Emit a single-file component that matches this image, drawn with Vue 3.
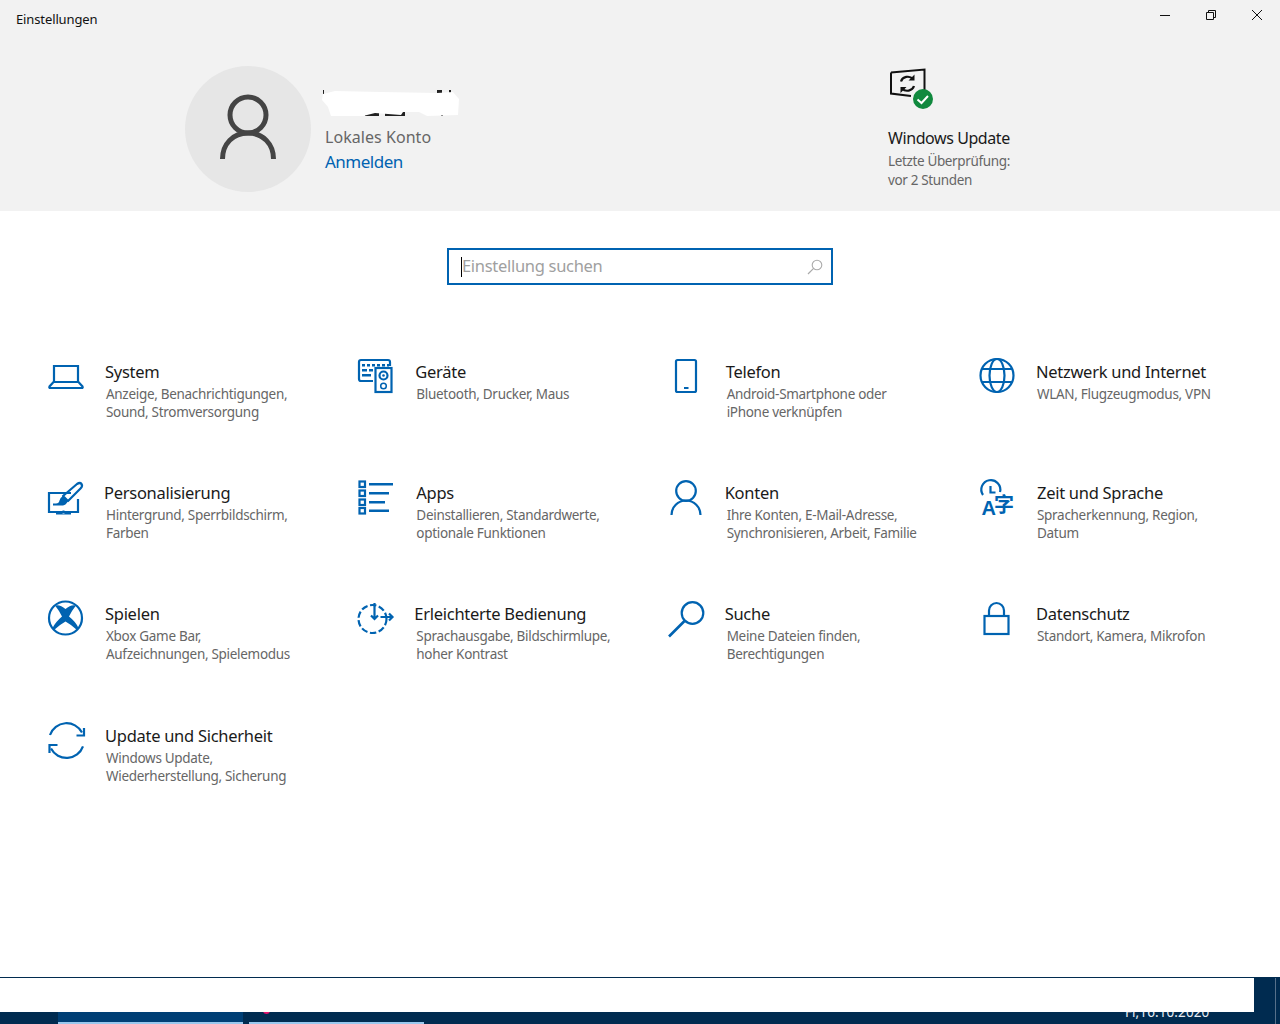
<script setup>
const items = [
  { icon: 'laptop', title: 'System', l1: 'Anzeige, Benachrichtigungen,', l2: 'Sound, Stromversorgung', dx: 0 },
  { icon: 'devices', title: 'Geräte', l1: 'Bluetooth, Drucker, Maus', l2: '', dx: 0 },
  { icon: 'phone', title: 'Telefon', l1: 'Android-Smartphone oder', l2: 'iPhone verknüpfen', dx: 0 },
  { icon: 'globe', title: 'Netzwerk und Internet', l1: 'WLAN, Flugzeugmodus, VPN', l2: '', dx: 0 },
  { icon: 'brush', title: 'Personalisierung', l1: 'Hintergrund, Sperrbildschirm,', l2: 'Farben', dx: -1 },
  { icon: 'apps', title: 'Apps', l1: 'Deinstallieren, Standardwerte,', l2: 'optionale Funktionen', dx: 1 },
  { icon: 'user', title: 'Konten', l1: 'Ihre Konten, E-Mail-Adresse,', l2: 'Synchronisieren, Arbeit, Familie', dx: -1 },
  { icon: 'time', title: 'Zeit und Sprache', l1: 'Spracherkennung, Region,', l2: 'Datum', dx: 1 },
  { icon: 'xbox', title: 'Spielen', l1: 'Xbox Game Bar,', l2: 'Aufzeichnungen, Spielemodus', dx: 0 },
  { icon: 'ease', title: 'Erleichterte Bedienung', l1: 'Sprachausgabe, Bildschirmlupe,', l2: 'hoher Kontrast', dx: -1 },
  { icon: 'search', title: 'Suche', l1: 'Meine Dateien finden,', l2: 'Berechtigungen', dx: -1 },
  { icon: 'lock', title: 'Datenschutz', l1: 'Standort, Kamera, Mikrofon', l2: '', dx: 0 },
  { icon: 'sync', title: 'Update und Sicherheit', l1: 'Windows Update,', l2: 'Wiederherstellung, Sicherung', dx: 0 }
]
</script>

<template>
  <div class="window">
    <header class="head">
      <div class="titlebar">
        <span class="apptitle">Einstellungen</span>
        <div class="controls">
          <span class="ctl"><svg width="12" height="12" viewBox="0 0 12 12"><path d="M1 6.5h10" stroke="#111" fill="none"/></svg></span>
          <span class="ctl"><svg width="12" height="12" viewBox="0 0 12 12"><path d="M1.5 3.5h7v7h-7zM3.5 3.500v-2h7v7h-2" stroke="#111" fill="none"/></svg></span>
          <span class="ctl"><svg width="12" height="12" viewBox="0 0 12 12"><path d="M1 1l10 10M11 1L1 11" stroke="#111" fill="none"/></svg></span>
        </div>
      </div>
      <div class="summary">
        <div class="profile">
          <div class="avatar">
            <svg width="60" height="70" viewBox="0 0 60 70">
              <circle cx="30" cy="21" r="18" fill="none" stroke="#444" stroke-width="5"/>
              <path d="M4.500 65C4.500 50 15 39 30 39S55.500 50 55.500 65" fill="none" stroke="#444" stroke-width="5"/>
            </svg>
          </div>
          <div class="who">
            <svg class="blot" width="142" height="30" viewBox="0 0 142 30">
              <path d="M4 2h1v4H4zM118 2h5v3h-5zM130 2h2v3h-2zM32 24h8v4h-8zM46 24h14v4H46zM66 24h20v4H66zM122 25h2v3h-2z" fill="#222"/>
              <path d="M4 6L16 3 62 4 118 5 134 4 140 11 139 27 108 28 100 24 84 24 82 27 56 25 44 28 12 28 9 19 3 12Z" fill="#fff"/>
            </svg>
            <div class="local">Lokales Konto</div>
            <div class="link">Anmelden</div>
          </div>
        </div>
        <div class="wu">
          <svg class="wuicon" width="46" height="46" viewBox="0 0 46 46">
            <path d="M3 6.500L36.500 3.500V25M23 30L3 27.500V6.500" fill="none" stroke="#111" stroke-width="2"/>
            <path d="M13 15.500a7 6.500 0 0 1 12-2.500M26 20a7 6.500 0 0 1-12 2.500" fill="none" stroke="#111" stroke-width="2.200"/>
            <path d="M26.500 8.500v6h-6zM12.500 27v-6h6z" fill="#111"/>
            <circle cx="35" cy="33" r="10" fill="#10893e"/>
            <path d="M29.500 33.500l4 3.500 6.500-7" fill="none" stroke="#fff" stroke-width="2"/>
          </svg>
          <div class="wutitle">Windows Update</div>
          <div class="wusub">Letzte Überprüfung:</div>
          <div class="wusub">vor 2 Stunden</div>
        </div>
      </div>
    </header>

    <main class="main">
      <div class="searchbox">
        <span class="caret"></span>
        <span class="placeholder">Einstellung suchen</span>
        <svg width="16" height="16" viewBox="0 0 16 16">
          <circle cx="10" cy="6" r="4.800" fill="none" stroke="#aaa" stroke-width="1.100"/>
          <path d="M6.600 9.400L1 15" fill="none" stroke="#aaa" stroke-width="1.200"/>
        </svg>
      </div>

      <div class="grid">
        <div v-for="item in items" :key="item.title" class="cell">
          <svg class="ico" width="40" height="40" viewBox="0 0 40 40">
            <g v-if="item.icon === 'laptop'" class="ln">
              <path d="M8 25V9h24v16"/>
              <path d="M7.500 25h25l4 4.500q.8 1.500-1 1.500H4.500q-1.800 0-1-1.500z"/>
            </g>
            <g v-else-if="item.icon === 'devices'">
              <path class="ln" d="M17 24H5q-2 0-2-2V5q0-2 2-2h27q2 0 2 2v4"/>
              <path class="fl" d="M6 7h3v2.500H6zM11 7h3v2.500h-3zM16 7h3v2.500h-3zM21 7h3v2.500h-3zM26 7h3v2.500h-3zM31 7h2v2.500h-2zM6 12h5v2.500H6zM13 12h4v2.500h-4zM6 17h9v2.500H6z"/>
              <rect class="ln" x="19.500" y="11" width="16" height="24"/>
              <circle class="ln" cx="27.500" cy="18.500" r="4"/>
              <circle class="fl" cx="27.500" cy="18.500" r="1.300"/>
              <circle class="ln thin" cx="27.500" cy="29" r="2.800"/>
            </g>
            <g v-else-if="item.icon === 'phone'">
              <rect class="ln" x="9" y="3" width="20" height="32" rx="1.500"/>
              <path class="fl" d="M17 30h4.500v2H17z"/>
            </g>
            <g v-else-if="item.icon === 'globe'" class="ln">
              <circle cx="20" cy="18.500" r="16.500"/>
              <ellipse cx="20" cy="18.500" rx="7.500" ry="16.500"/>
              <path d="M5 12h30M5 25h30"/>
            </g>
            <g v-else-if="item.icon === 'brush'">
              <path class="ln" d="M25 15H3v19h29V21"/>
              <path class="fl" d="M16.500 33h2v3h-2zM10 37h15v-2H10z" transform="translate(0 -.5)"/>
              <path class="ln" d="M22 23l-5-5L31 6q3-2 4.500 0t-1 4.500z" stroke-linejoin="round"/>
              <path class="fl" d="M17 18l5 5q-2 4-5 4.500H7v-2h3q3 0 3.500-3t3.500-4.500z"/>
            </g>
            <g v-else-if="item.icon === 'apps'">
              <g v-for="(w, i) in [24, 20, 16, 20]" :key="i">
                <rect class="ln thin2" x="3.500" :y="[3.500, 12.500, 21.500, 30][i]" width="5.500" height="5.500"/>
                <rect class="fl" x="13" :y="[5, 14, 23, 31.500][i]" :width="w" height="2.500"/>
              </g>
            </g>
            <g v-else-if="item.icon === 'user'" class="ln">
              <circle cx="19" cy="13" r="9.800"/>
              <path d="M4.500 37a14.500 14.500 0 0 1 29 0"/>
            </g>
            <g v-else-if="item.icon === 'time'">
              <path class="ln" d="M6 17a9.500 9.500 0 1 1 17-3"/>
              <path class="ln" d="M13.500 8v6.500h5"/>
              <text class="glyph" x="4.500" y="37">A</text>
              <text class="glyph cjk" x="17" y="33.500">字</text>
            </g>
            <g v-else-if="item.icon === 'xbox'">
              <circle class="ln" cx="19.500" cy="19" r="16.500"/>
              <path class="fl" d="M9 6.500Q14 5 19.500 10 25 5 30 6.500 25.500 12 23 17.500 30 23 32.500 29L31 31Q25 25.500 19.500 22.500 14 25.500 8 31L6.500 29Q9.500 23 16 17.500 13.500 12 9 6.500Z"/>
            </g>
            <g v-else-if="item.icon === 'ease'">
              <circle class="ln dash" cx="16.500" cy="20" r="14"/>
              <path class="ln" d="M18.500 4v16M15 16.500l3.500 3.500 3.500-3.500M24.500 18h12M33 14.500l3.500 3.500-3.500 3.500"/>
            </g>
            <g v-else-if="item.icon === 'search'">
              <circle class="ln" cx="25.500" cy="14" r="10.800"/>
              <path class="ln thick" d="M17.500 22L2 37.500"/>
            </g>
            <g v-else-if="item.icon === 'lock'" class="ln">
              <rect x="7.500" y="17" width="24" height="18"/>
              <path d="M12 17V11.500a7.500 7.500 0 0 1 15 0V17"/>
            </g>
            <g v-else-if="item.icon === 'sync'" class="ln">
              <path d="M4 14A17.500 17.500 0 0 1 36 11.500"/>
              <path d="M38 7V14.500H30.500"/>
              <path d="M37 25.300A17.500 17.500 0 0 1 5 27.500"/>
              <path d="M3.500 32V24H11.500"/>
            </g>
          </svg>
          <div class="text">
            <div class="ttl" :style="{ marginLeft: item.dx + 'px' }">{{ item.title }}</div>
            <div class="desc">{{ item.l1 }}</div>
            <div v-if="item.l2" class="desc">{{ item.l2 }}</div>
          </div>
        </div>
      </div>
    </main>

    <footer class="foot">
      <div class="strip"></div>
      <div class="taskbar">
        <span class="task active"></span>
        <span class="task second"><i class="dot"></i></span>
        <span class="clock">Fr,16.10.2020</span>
      </div>
    </footer>
  </div>
</template>

<style scoped>
.window {
  width: 1280px;
  height: 1024px;
  display: flex;
  flex-direction: column;
  overflow: hidden;
  background: #fff;
  font-family: "Noto Sans", "Open Sans", sans-serif;
  color: #1a1a1a;
}
.head { height: 211px; background: #f2f2f2; flex: none; }
.titlebar { height: 38px; display: flex; justify-content: space-between; align-items: flex-start; }
.apptitle { font-size: 13px; line-height: 38px; padding-left: 16px; color: #111; letter-spacing: -.12px; }
.controls { display: flex; }
.ctl { width: 46px; height: 30px; display: flex; align-items: center; justify-content: center; }
.summary { display: flex; margin-top: 28px; padding-left: 185px; }
.profile { width: 703px; display: flex; gap: 14px; }
.avatar { width: 126px; height: 126px; border-radius: 50%; background: #e6e6e6; display: flex; align-items: center; justify-content: center; flex: none; }
.who { padding-top: 22px; }
.blot { display: block; margin: 0 0 7px -6px; }
.local { font-size: 16px; line-height: 25px; color: #666; letter-spacing: .05px; }
.link { font-size: 17px; line-height: 24px; color: #0063b1; letter-spacing: -.5px; }
.wuicon { display: block; margin-bottom: 14px; }
.wutitle { font-size: 16px; line-height: 24px; color: #1a1a1a; letter-spacing: -.42px; margin-bottom: 2px; }
.wusub { font-size: 13.500px; line-height: 19px; color: #666; letter-spacing: -.36px; }
.main { flex: 1; min-height: 0; }
.searchbox {
  width: 386px; height: 37px; box-sizing: border-box; margin: 37px auto 0;
  border: 2px solid #0063b1; display: flex; align-items: center; padding: 0 8px 0 12px; position: relative;
}
.caret { width: 1px; height: 20px; background: #000; flex: none; }
.placeholder { flex: 1; font-size: 16.500px; line-height: 22px; padding-bottom: 2px; color: #a0a0a0; letter-spacing: -.3px; }
.grid { display: grid; grid-template-columns: repeat(4, 310.330px); grid-template-rows: 121px 121px 122px 121px; padding-left: 46px; margin-top: 72px; }
.cell { display: flex; gap: 19px; }
.ico { flex: none; overflow: visible; }
.ln { fill: none; stroke: #0063b1; stroke-width: 2.200; }
.ln * { fill: none; stroke: #0063b1; stroke-width: 2.200; }
.thin { stroke-width: 1.500; }
.thin2 { stroke-width: 2.200; }
.thick { stroke-width: 2.600; }
.dash { stroke-dasharray: 6.500 2.500; }
.fl { fill: #0063b1; }
.glyph { font-family: "Liberation Sans", sans-serif; font-size: 20px; fill: #0063b1; font-weight: 700; }
.cjk { font-family: "Noto Sans CJK SC", sans-serif; font-size: 20px; font-weight: 700; }
.text { padding-top: 3px; }
.ttl { font-size: 16.500px; line-height: 24px; color: #1a1a1a; letter-spacing: -.28px; margin-bottom: 1px; }
.desc { font-size: 13.500px; line-height: 18px; color: #666; letter-spacing: -.3px; margin-left: 1px; white-space: nowrap; }
.foot { flex: none; height: 47px; border-top: 1px solid #012c50; background: #002b50; position: relative; box-sizing: border-box; display: flex; flex-direction: column; }
.foot::after { content: ""; position: absolute; left: 1275px; top: 0; bottom: 0; width: 1px; background: #56708a; }
.strip { height: 34px; width: 1254px; background: #fff; flex: none; }
.taskbar { height: 12px; display: flex; overflow: hidden; padding-left: 58px; position: relative; }
.task { height: 12px; box-sizing: border-box; border-bottom: 2px solid #99c8ee; flex: none; display: block; position: relative; }
.active { width: 185px; background: #003f75; }
.second { width: 175px; margin-left: 6px; }
.dot { position: absolute; left: 14px; top: -5px; width: 7px; height: 7px; border-radius: 50%; background: #e3116c; }
.clock { position: absolute; left: 1125px; top: -9px; font-family: "Noto Sans", sans-serif; font-size: 13.500px; line-height: 18px; color: #e8eef4; letter-spacing: .1px; }
</style>
